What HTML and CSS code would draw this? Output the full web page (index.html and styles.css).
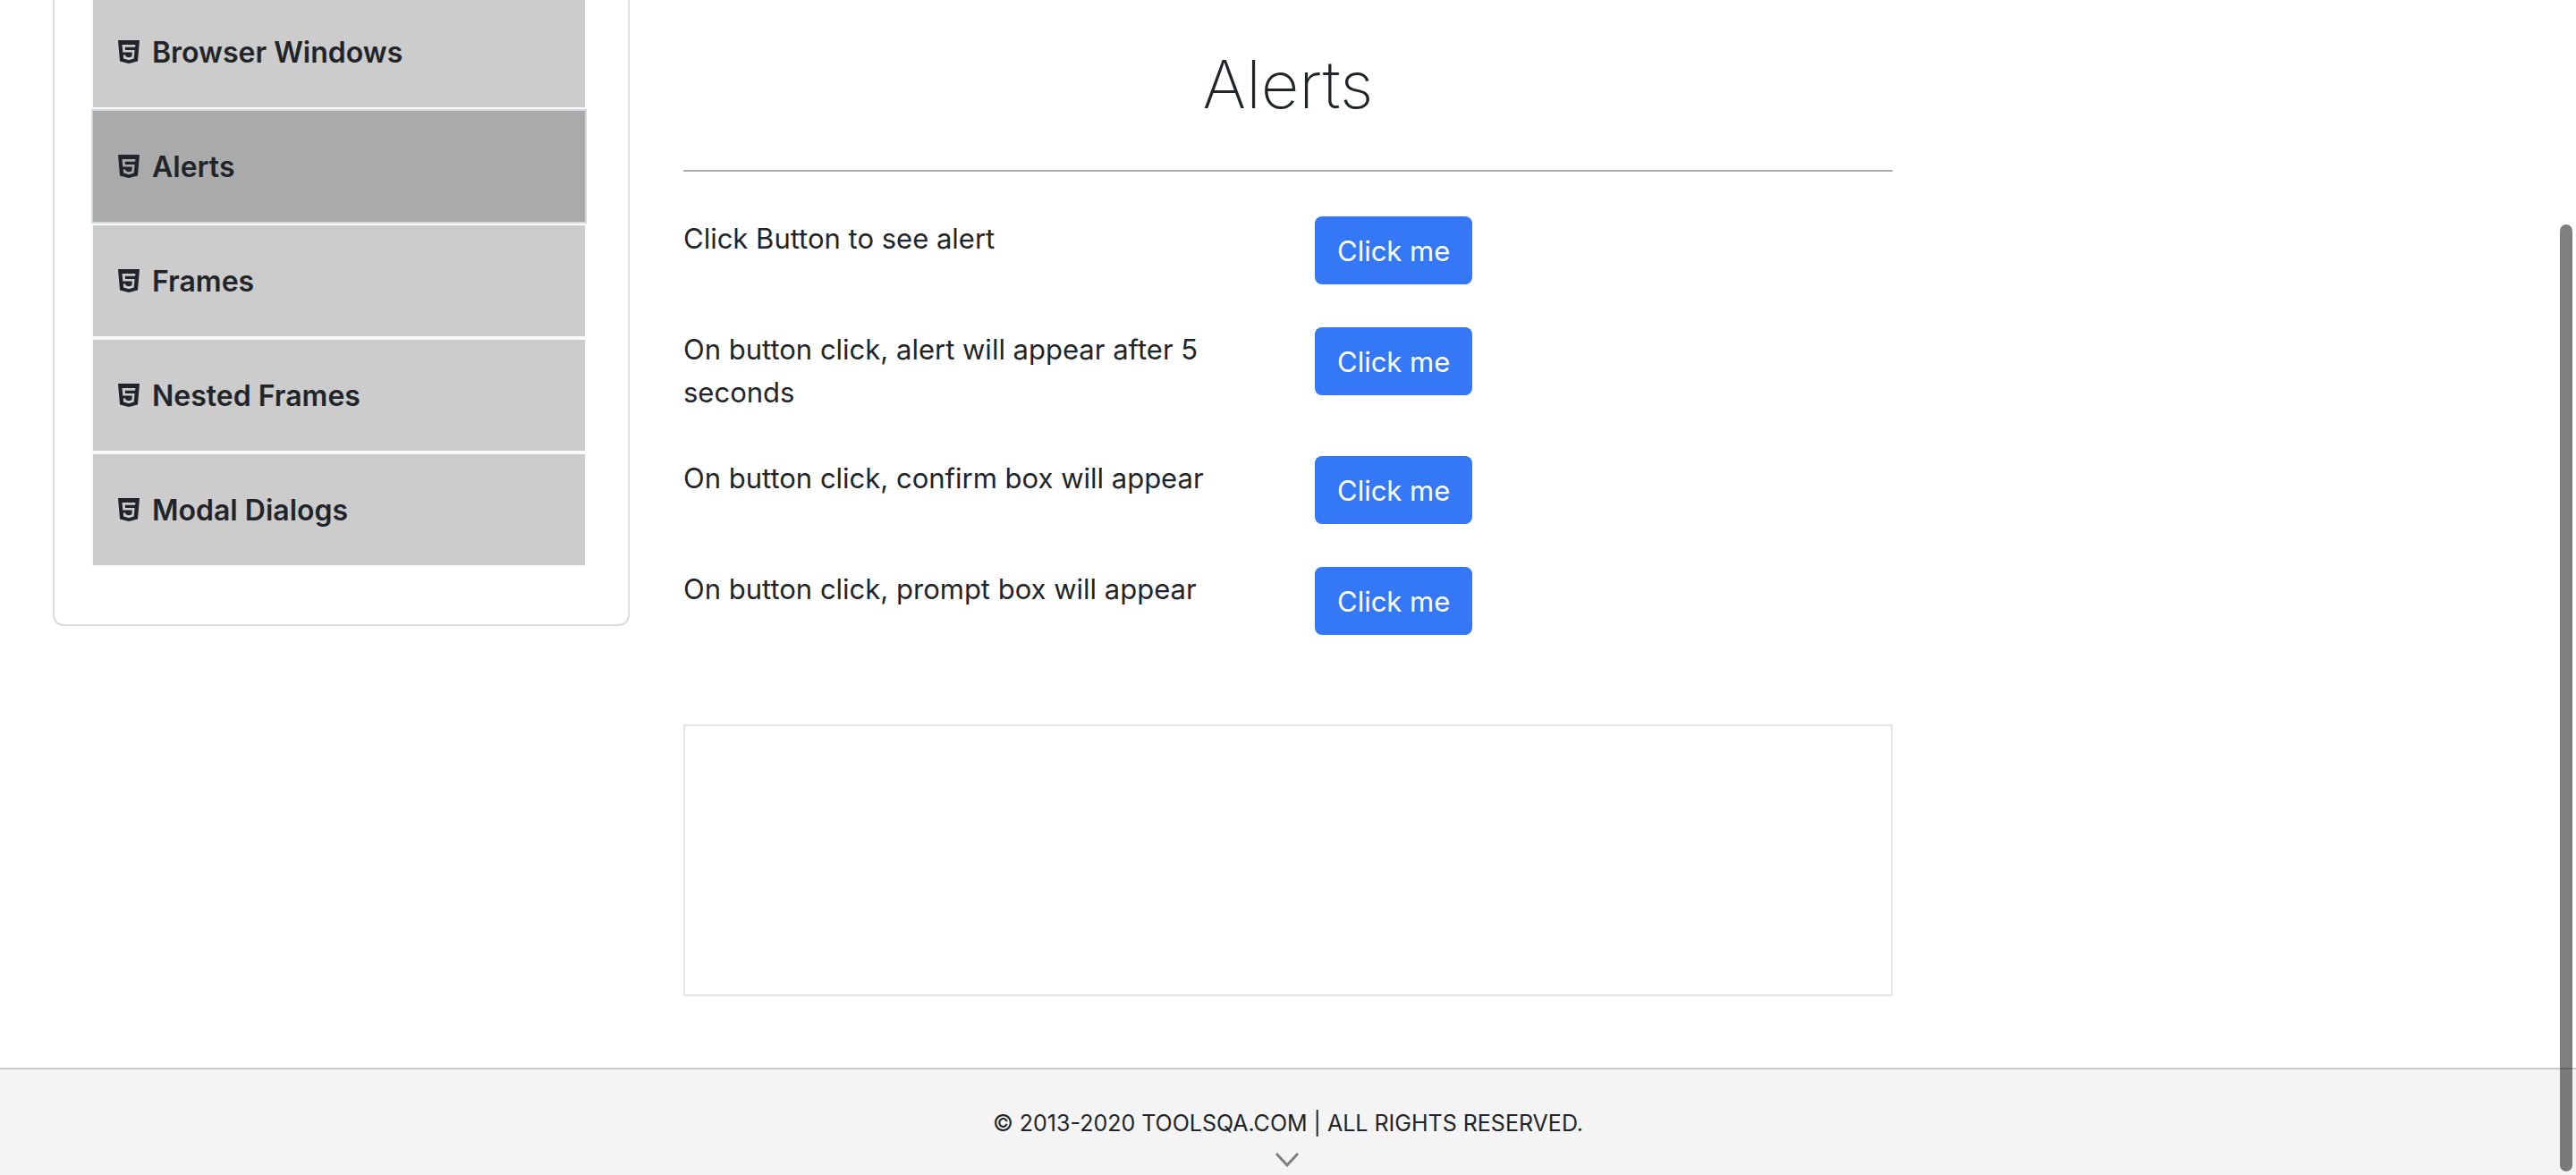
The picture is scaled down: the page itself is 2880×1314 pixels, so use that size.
FILE: index.html
```html
<!DOCTYPE html>
<html lang="en">
<head>
<meta charset="utf-8">
<title>Alerts</title>
<link rel="stylesheet" href="styles.css">
</head>
<body>
<svg class="sprite" aria-hidden="true">
  <symbol id="html5" viewBox="0 0 24 26">
    <path fill-rule="evenodd" d="M0 0h24l-2 23.500l-10 2.500l-10-2.500zM4.500 5l.8 8.500h10.500l-.4 4.700l-3.400 1l-3.400-1l-.2-1.700h-2.600l.4 3.900l5.800 1.800l5.700-1.800l.9-9.400h-10.600l-.3-3.300h11.400l.3-2.700z"/>
  </symbol>
</svg>
<div class="row">
  <nav class="sidebar">
    <ul class="menu">
      <li><a class="item" href="#"><svg class="icon"><use href="#html5"/></svg><span>Browser Windows</span></a></li>
      <li><a class="item active" href="#" aria-current="page"><svg class="icon"><use href="#html5"/></svg><span>Alerts</span></a></li>
      <li><a class="item" href="#"><svg class="icon"><use href="#html5"/></svg><span>Frames</span></a></li>
      <li><a class="item" href="#"><svg class="icon"><use href="#html5"/></svg><span>Nested Frames</span></a></li>
      <li><a class="item" href="#"><svg class="icon"><use href="#html5"/></svg><span>Modal Dialogs</span></a></li>
    </ul>
  </nav>
  <main class="content">
    <h1 class="title">Alerts</h1>
    <div class="actions">
      <div class="action"><label for="alert">Click Button to see alert</label><button id="alert" class="btn" type="button">Click me</button></div>
      <div class="action"><label for="timer">On button click, alert will appear after 5 seconds</label><button id="timer" class="btn" type="button">Click me</button></div>
      <div class="action"><label for="confirm">On button click, confirm box will appear</label><button id="confirm" class="btn" type="button">Click me</button></div>
      <div class="action"><label for="prompt">On button click, prompt box will appear</label><button id="prompt" class="btn" type="button">Click me</button></div>
    </div>
    <div class="output"></div>
  </main>
</div>
<footer class="footer">
  <span>© 2013-2020 TOOLSQA.COM | ALL RIGHTS RESERVED.</span>
  <svg class="chevron" viewBox="0 0 28 18" aria-hidden="true"><path d="M1 2l12 13l12-13"/></svg>
</footer>
<div class="scrollbar"></div>
</body>
</html>
```

FILE: styles.css
```css
* { box-sizing: border-box; }
html, body { height: 100%; }
body {
  margin: 0;
  display: flex;
  flex-direction: column;
  overflow: hidden;
  background: #fff;
  color: #212529;
  font: 400 31px/48px Inter, "Liberation Sans", sans-serif;
}
.sprite { display: none; }
.row {
  display: grid;
  grid-template-columns: 1fr 2fr 1fr;
  align-items: start;
  padding: 0 28px;
}
.sidebar {
  margin: -6px 30px 0 31px;
  padding: 0 46px 64px 41px;
  border: 2px solid #dcdcdc;
  border-top: 0;
  border-radius: 0 0 12px 12px;
}
.menu { margin: 0; padding: 0; list-style: none; }
.item {
  display: flex;
  align-items: center;
  gap: 14px;
  height: 128px;
  padding: 2px 28px 0;
  border: 2px solid #f8f9fa;
  background: #ccc;
  color: inherit;
  font-size: 32px;
  font-weight: 600;
  text-decoration: none;
}
.item.active { background: #aaa; border-color: #d3d8dc; }
.icon { width: 24px; height: 26px; margin-bottom: 2px; fill: currentColor; }
.content { padding: 0 30px 80px; }
.title {
  margin: 0 0 50px;
  padding: 46px 0 48px;
  border-bottom: 2px solid #adadad;
  font-size: 74px;
  font-weight: 200;
  line-height: 96px;
  text-align: center;
}
.actions { display: grid; gap: 48px; }
.action {
  display: grid;
  grid-template-columns: 1fr 1fr;
  column-gap: 60px;
  align-items: start;
  justify-items: start;
}
.action label { padding-top: 1px; margin-bottom: -1px; }
.btn {
  padding: 15px 25px 13px;
  border: 0;
  border-radius: 8px;
  background: #3478f6;
  color: #fff;
  font: inherit;
}
.output { height: 304px; margin-top: 100px; border: 2px solid #e4e4e4; }
.footer {
  flex: 1;
  display: flex;
  flex-direction: column;
  align-items: center;
  padding-top: 36px;
  border-top: 2px solid #c9c9c9;
  background: #f4f4f4;
  font-size: 25px;
}
.chevron {
  width: 28px;
  height: 18px;
  margin-top: 8px;
  fill: none;
  stroke: #808080;
  stroke-width: 3;
}
.scrollbar {
  position: fixed;
  top: 251px;
  right: 4px;
  bottom: 4px;
  width: 14px;
  border-radius: 7px;
  background: rgba(0, 0, 0, .5);
}
```
